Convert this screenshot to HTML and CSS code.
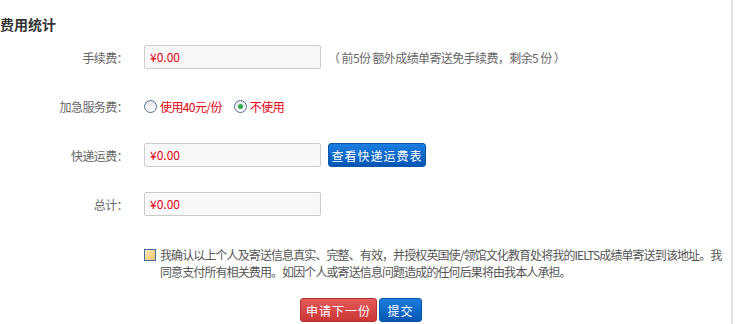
FILE: index.html
```html
<!DOCTYPE html>
<html lang="zh-CN">
<head>
    <meta charset="UTF-8">
    <title>费用统计</title>
    <link rel="stylesheet" href="styles.css">
</head>
<body>
    <div class="page">
        <!-- 费用统计 -->
        <h3 class="section-title">费用统计</h3>

        <div class="form-row">
            <label class="form-label">手续费：</label>
            <div class="form-field">
                <div class="money-box">¥0.00</div>
                <span class="hint">（ 前5份 额外成绩单寄送免手续费，剩余5 份 ）</span>
            </div>
        </div>

        <div class="form-row">
            <label class="form-label">加急服务费：</label>
            <div class="form-field">
                <span class="radio"></span>
                <span class="radio-text">使用40元/份</span>
                <span class="radio checked"></span>
                <span class="radio-text">不使用</span>
            </div>
        </div>

        <div class="form-row">
            <label class="form-label">快递运费：</label>
            <div class="form-field">
                <div class="money-box">¥0.00</div>
                <button class="btn btn-blue btn-wide">查看快递运费表</button>
            </div>
        </div>

        <div class="form-row">
            <label class="form-label">总计：</label>
            <div class="form-field">
                <div class="money-box">¥0.00</div>
            </div>
        </div>

        <!-- 确认声明 -->
        <div class="agree">
            <span class="checkbox"></span>
            <p class="agree-text">我确认以上个人及寄送信息真实、完整、有效，并授权英国使/领馆文化教育处将我的IELTS成绩单寄送到该地址。我同意支付所有相关费用。如因个人或寄送信息问题造成的任何后果将由我本人承担。</p>
        </div>

        <div class="actions">
            <button class="btn btn-red">申请下一份</button>
            <button class="btn btn-blue">提交</button>
        </div>
    </div>
</body>
</html>
```

FILE: styles.css
```css
/* 页面整体 */
body {
    margin: 0;
    background: #fff;
    font-family: "Noto Sans CJK SC", "Liberation Sans", sans-serif;
    font-size: 12px;
    color: #666;
}

.page {
    width: 731px;
    height: 324px;
    border-right: 2px solid #e2e2e2;
}

/* 标题 */
.section-title {
    margin: 0;
    padding: 14px 0 0 0;
    height: 31px;
    font-size: 14px;
    line-height: 20px;
    font-weight: bold;
    color: #333;
}

/* 表单行 */
.form-row {
    display: flex;
    align-items: center;
    height: 24px;
    margin-bottom: 25px;
}

.form-label {
    width: 128px;
    text-align: right;
    letter-spacing: -0.6px;
}

.form-field {
    display: flex;
    align-items: center;
    margin-left: 16px;
}

/* 金额框 */
.money-box {
    width: 170px;
    height: 22px;
    line-height: 22px;
    padding-left: 5px;
    border: 1px solid #ccc;
    border-radius: 2px;
    background: #f8f8f8;
    color: #e60012;
}

.hint {
    margin-left: 7px;
    letter-spacing: -0.6px;
}

/* 单选框 */
.radio {
    width: 11px;
    height: 11px;
    border: 1px solid #4f6f96;
    border-radius: 50%;
    background: linear-gradient(#e6e6e6, #fff);
    display: flex;
    align-items: center;
    justify-content: center;
}

.radio.checked::after {
    content: "";
    width: 5px;
    height: 5px;
    border-radius: 50%;
    background: #32a84a;
}

.radio-text {
    color: #e60012;
    margin: 0 12px 0 3px;
    letter-spacing: -0.6px;
}

/* 按钮 */
.btn {
    height: 24px;
    border: 1px solid transparent;
    border-radius: 3px;
    color: #fff;
    font-family: inherit;
    font-size: 12px;
    padding: 0 8px;
    letter-spacing: 1px;
    cursor: pointer;
}

.btn-blue {
    background: linear-gradient(#1a7ee0, #0556b3);
    border-color: #0a56a8;
}

.btn-red {
    background: linear-gradient(#e65a5a, #c93636);
    border-color: #b33030;
}

.btn-wide {
    margin-left: 7px;
    width: 98px;
    padding: 0;
}

/* 确认声明 */
.agree {
    display: flex;
    align-items: flex-start;
    margin: 30px 0 0 144px;
}

.checkbox {
    flex: none;
    width: 10px;
    height: 10px;
    margin-top: 3px;
    border: 1px solid #3c6ea5;
    background: linear-gradient(135deg, #fce9b8, #f5c46a);
}

.agree-text {
    margin: 0 0 0 4px;
    width: 572px;
    line-height: 17px;
    letter-spacing: -0.9px;
    color: #555;
}

/* 底部按钮 */
.actions {
    display: flex;
    gap: 2px;
    margin: 18px 0 0 300px;
}

.actions .btn-red {
    width: 77px;
    padding: 0;
}

.actions .btn-blue {
    width: 43px;
    padding: 0;
}
```
